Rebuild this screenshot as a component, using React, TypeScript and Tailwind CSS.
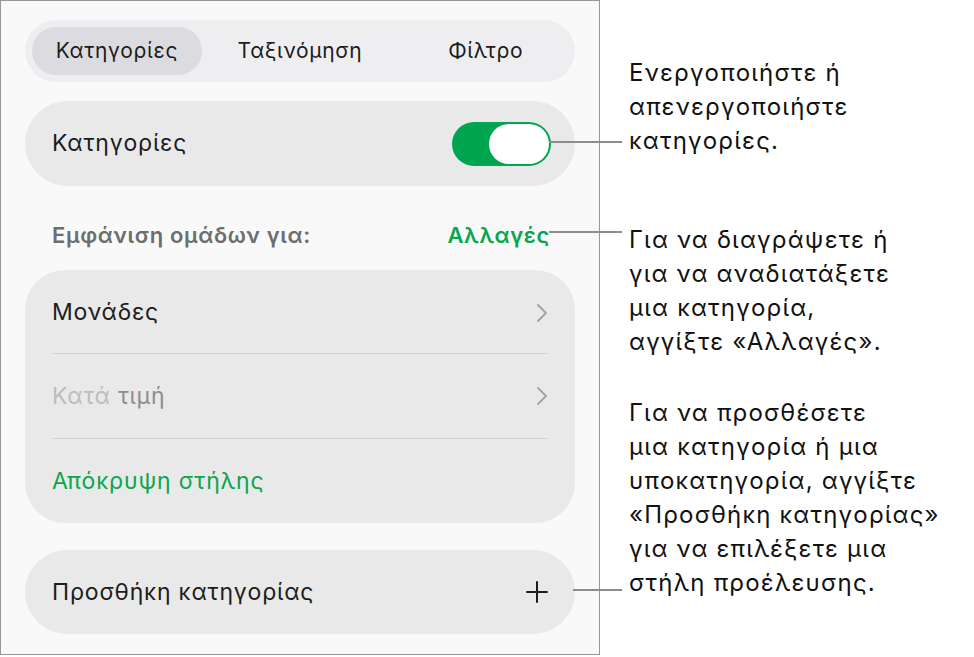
const font = { fontFamily: "Inter, Roboto, 'Noto Sans', sans-serif" };

function Chevron() {
  return (
    <svg width="12" height="20" viewBox="0 0 12 20" fill="none">
      <path d="M2 2l8 8-8 8" stroke="#a3a3a3" strokeWidth="1.8" strokeLinecap="round" strokeLinejoin="round" />
    </svg>
  );
}

function Plus() {
  return (
    <svg width="24" height="24" viewBox="0 0 24 24" fill="none">
      <path d="M12 2v20M2 12h20" stroke="#1c1c1c" strokeWidth="2" strokeLinecap="round" />
    </svg>
  );
}

function Leader({ top, left, width }: { top: number; left: number; width: number }) {
  return (
    <div
      className="absolute h-[2px] bg-[#8c8c8c]"
      style={{ top, left, width }}
    />
  );
}

export default function App() {
  return (
    <div className="relative w-[974px] h-[657px] bg-white text-[#1c1c1c]" style={font}>
      <div className="flex">
        {/* panel */}
        <div className="w-[600px] h-[655px] border border-[#979797] bg-[#f9f9f9] px-[24px] pt-[19px] flex flex-col">
          <div className="h-[62px] rounded-full bg-[#eeeef0] p-[7px] grid grid-cols-3 text-[21px] tracking-[0.03em]">
            <div className="rounded-full bg-[#dcdce0] flex items-center justify-center mr-[9px]">Κατηγορίες</div>
            <div className="flex items-center justify-center">Ταξινόμηση</div>
            <div className="flex items-center justify-center pl-[14px]">Φίλτρο</div>
          </div>

          <div className="mt-[19px] h-[85px] rounded-full bg-[#e9e9e9] flex items-center justify-between pl-[27px] pr-[24px]">
            <span className="text-[23px] tracking-[0.035em]">Κατηγορίες</span>
            <div className="w-[99px] h-[44px] rounded-full bg-[#00a550] p-[2px] flex justify-end">
              <div className="w-[60px] h-full rounded-full bg-white" />
            </div>
          </div>

          <div className="mt-[33px] flex items-center justify-between pl-[27px] pr-[25px] text-[22px] font-semibold tracking-[0.03em]">
            <span className="text-[#6e6e6e]">Εμφάνιση ομάδων για:</span>
            <span className="text-[#0aa64e]">Αλλαγές</span>
          </div>

          <div className="mt-[18px] rounded-[40px] bg-[#e9e9e9] px-[27px] text-[23px] tracking-[0.035em]">
            <div className="h-[84px] flex items-center justify-between border-b border-[#d2d2d2] pt-[2px]">
              <span>Μονάδες</span>
              <Chevron />
            </div>
            <div className="h-[85px] flex items-center justify-between border-b border-[#d2d2d2]">
              <span>
                <span className="text-[#bdbdbd]">Κατά</span> <span className="text-[#8e8e8e]">τιμή</span>
              </span>
              <Chevron />
            </div>
            <div className="h-[84px] flex items-center text-[#0aa64e]">Απόκρυψη στήλης</div>
          </div>

          <div className="mt-[27px] h-[84px] rounded-full bg-[#e9e9e9] flex items-center justify-between pl-[27px] pr-[26px] text-[23px] tracking-[0.035em]">
            <span>Προσθήκη κατηγορίας</span>
            <Plus />
          </div>
        </div>

        {/* callouts */}
        <div className="pl-[29px] text-[24px] leading-[34px] tracking-[0.05em] text-[#111] whitespace-nowrap">
          <p className="mt-[56px]">
            Ενεργοποιήστε ή
            <br />
            απενεργοποιήστε
            <br />
            κατηγορίες.
          </p>
          <p className="mt-[65px]">
            Για να διαγράψετε ή
            <br />
            για να αναδιατάξετε
            <br />
            μια κατηγορία,
            <br />
            αγγίξτε «Αλλαγές».
          </p>
          <p className="mt-[37px]">
            Για να προσθέσετε
            <br />
            μια κατηγορία ή μια
            <br />
            υποκατηγορία, αγγίξτε
            <br />
            «Προσθήκη κατηγορίας»
            <br />
            για να επιλέξετε μια
            <br />
            στήλη προέλευσης.
          </p>
        </div>
      </div>

      <Leader top={141} left={549} width={73} />
      <Leader top={231} left={549} width={73} />
      <Leader top={589} left={573} width={49} />
    </div>
  );
}
